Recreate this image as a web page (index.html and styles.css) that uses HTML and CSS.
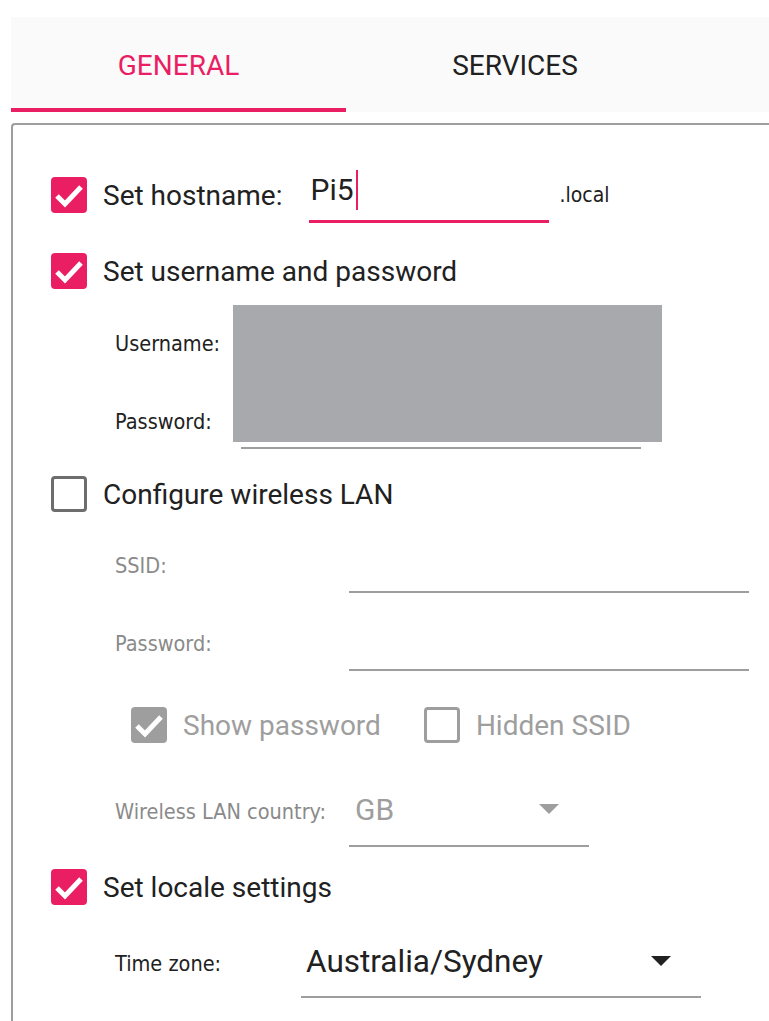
FILE: index.html
```html
<!DOCTYPE html>
<html lang="en">
<head>
    <meta charset="UTF-8">
    <meta name="viewport" content="width=device-width, initial-scale=1.0">
    <title>OS Customisation</title>
    <link rel="stylesheet" href="styles.css">
</head>
<body>
    <div class="tabs">
        <div class="tab active">General</div>
        <div class="tab">Services</div>
    </div>

    <div class="panel">
        <div class="check-row">
            <span class="check on"><svg viewBox="0 0 36 36"><polyline points="6,19 14,27 30,10"/></svg></span>
            <span class="check-text">Set hostname:</span>
            <div class="hostname-input">Pi5<span class="caret"></span></div>
            <span class="suffix">.local</span>
        </div>

        <div class="check-row user-row">
            <span class="check on"><svg viewBox="0 0 36 36"><polyline points="6,19 14,27 30,10"/></svg></span>
            <span class="check-text">Set username and password</span>
        </div>

        <div class="creds">
            <div class="field-row">
                <span class="label cred-label">Username:</span>
                <div class="line cred-input"></div>
            </div>
            <div class="field-row">
                <span class="label cred-label">Password:</span>
                <div class="line cred-input"></div>
            </div>
            <div class="redact"></div>
        </div>

        <div class="check-row wlan-row">
            <span class="check"></span>
            <span class="check-text">Configure wireless LAN</span>
        </div>

        <div class="sub disabled">
            <div class="field-row ssid-row">
                <span class="label wide-label">SSID:</span>
                <div class="line wide-input"></div>
            </div>
            <div class="field-row pass-row">
                <span class="label wide-label">Password:</span>
                <div class="line wide-input"></div>
            </div>

            <div class="opts">
                <div class="opt">
                    <span class="check on grey"><svg viewBox="0 0 36 36"><polyline points="6,19 14,27 30,10"/></svg></span>
                    <span class="check-text">Show password</span>
                </div>
                <div class="opt">
                    <span class="check grey"></span>
                    <span class="check-text">Hidden SSID</span>
                </div>
            </div>

            <div class="field-row country-row">
                <span class="label wide-label">Wireless LAN country:</span>
                <div class="select country-select">
                    <span class="value">GB</span>
                    <span class="arrow"></span>
                </div>
            </div>
        </div>

        <div class="check-row locale-row">
            <span class="check on"><svg viewBox="0 0 36 36"><polyline points="6,19 14,27 30,10"/></svg></span>
            <span class="check-text">Set locale settings</span>
        </div>

        <div class="sub">
            <div class="field-row tz-row">
                <span class="label tz-label">Time zone:</span>
                <div class="select tz-select">
                    <span class="value">Australia/Sydney</span>
                    <span class="arrow"></span>
                </div>
            </div>
        </div>
    </div>
</body>
</html>
```

FILE: styles.css
```css
html, body {
    overflow: hidden;
}

body {
    margin: 0;
    padding: 0;
    background: #ffffff;
    color: #212121;
    font-family: 'Roboto', 'Liberation Sans', sans-serif;
}

/* tabs */
.tabs {
    display: flex;
    margin: 17px 0 0 11px;
    height: 95px;
    background: #fafafa;
}

.tab {
    width: 335px;
    box-sizing: border-box;
    padding-top: 32px;
    text-align: center;
    font-size: 28px;
    text-transform: uppercase;
    color: #212121;
}

.tab.active {
    color: #e91e63;
    border-bottom: 4px solid #e91e63;
}

.tab + .tab {
    width: 338px;
}

/* panel */
.panel {
    margin: 11px 0 0 11px;
    padding: 42px 0 40px 38px;
    border: 2px solid #9e9e9e;
    border-right: none;
    border-radius: 4px 0 0 4px;
}

.check-row {
    display: flex;
    align-items: center;
    height: 56px;
}

.check {
    flex: none;
    width: 36px;
    height: 36px;
    box-sizing: border-box;
    border: 3px solid #6d6d6d;
    border-radius: 4px;
}

.check.on {
    border: none;
    background: #e91e63;
}

.check.grey {
    border-color: #9e9e9e;
}

.check.on.grey {
    background: #9e9e9e;
}

.check svg {
    display: block;
    width: 36px;
    height: 36px;
}

.check polyline {
    fill: none;
    stroke: #ffffff;
    stroke-width: 5;
}

.check-text {
    margin-left: 16px;
    font-size: 28px;
}

.hostname-input {
    display: flex;
    align-items: center;
    width: 240px;
    height: 56px;
    box-sizing: border-box;
    margin-left: 27px;
    padding: 0 0 8px 1px;
    border-bottom: 3px solid #e91e63;
    font-size: 30px;
}

.caret {
    width: 2px;
    height: 40px;
    margin-left: 2px;
    background: #e91e63;
}

.suffix {
    margin-left: 10px;
    font-family: 'DejaVu Sans', sans-serif;
    font-stretch: condensed;
    font-size: 21px;
}

.user-row {
    margin-top: 30px;
    height: 36px;
}

/* credentials */
.creds {
    position: relative;
    margin-top: 16px;
    padding: 10px 0 0 64px;
}

.field-row {
    display: flex;
    align-items: center;
}

.field-row + .field-row {
    margin-top: 22px;
}

.label {
    flex: none;
    font-family: 'DejaVu Sans', sans-serif;
    font-stretch: condensed;
    font-size: 21.5px;
}

.line {
    height: 56px;
    box-sizing: border-box;
    border-bottom: 2px solid #9e9e9e;
}

.cred-label {
    width: 126px;
}

.cred-input {
    width: 400px;
}

.redact {
    position: absolute;
    top: 0;
    left: 182px;
    width: 429px;
    height: 137px;
    background: #a8a9ac;
}

.wlan-row {
    margin-top: 27px;
    height: 36px;
}

.sub {
    padding-left: 64px;
}

.disabled {
    color: #9e9e9e;
}

.disabled .label {
    color: #8a8a8a;
}

.ssid-row {
    margin-top: 25px;
}

.wide-label {
    width: 234px;
}

.wide-input {
    width: 400px;
}

.opts {
    display: flex;
    margin: 36px 0 0 16px;
}

.opt {
    display: flex;
    align-items: center;
    margin-right: 43px;
}

.field-row.country-row {
    margin-top: 32px;
}

.select {
    position: relative;
    display: flex;
    align-items: center;
    box-sizing: border-box;
    border-bottom: 2px solid #9e9e9e;
}

.country-select {
    width: 240px;
    height: 72px;
    padding: 0 0 2px 6px;
    font-size: 30px;
    color: #9e9e9e;
}

.arrow {
    position: absolute;
    right: 30px;
    top: 50%;
    margin-top: -6px;
    border-left: 10px solid transparent;
    border-right: 10px solid transparent;
    border-top: 10px solid #9e9e9e;
}

.locale-row {
    margin-top: 22px;
    height: 36px;
}

.tz-row {
    margin-top: 23px;
}

.tz-label {
    width: 186px;
}

.tz-select {
    width: 400px;
    height: 70px;
    padding: 0 0 2px 5px;
    font-size: 31.5px;
}

.tz-select .arrow {
    border-top-color: #212121;
}
```
